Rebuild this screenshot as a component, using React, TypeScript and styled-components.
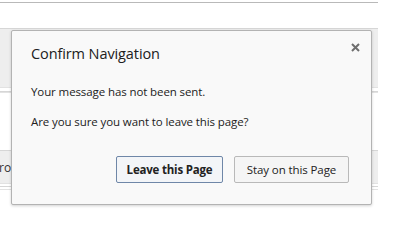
import styled, { createGlobalStyle } from "styled-components";

const GlobalStyle = createGlobalStyle`
  html, body {
    margin: 0;
    padding: 0;
    background: #ffffff;
  }
  body {
    font-family: "Open Sans", "Noto Sans", "Liberation Sans", sans-serif;
  }
`;

const Page = styled.div`
  position: relative;
  width: 397px;
  height: 225px;
  overflow: hidden;
  background: #ffffff;
`;

const Backdrop = styled.div`
  width: 378px;
  display: flex;
  flex-direction: column;
`;

const TopRule = styled.div`
  height: 2px;
  border-bottom: 1px solid #b9b9b9;
`;

const Band = styled.div<{ $gap: number; $height: number; $shade?: boolean }>`
  margin-top: ${(p) => p.$gap}px;
  height: ${(p) => p.$height}px;
  background: ${(p) => (p.$shade ? "#eeeeee" : "#ffffff")};
  border-top: 1px solid #d6d6d6;
  border-bottom: 1px solid #e2e2e2;
  display: flex;
  align-items: center;
  overflow: hidden;
`;

const ClippedText = styled.span`
  margin-left: -1px;
  font-size: 12px;
  color: #333333;
  font-family: "Open Sans", "Noto Sans", sans-serif;
`;

const Dialog = styled.div`
  position: absolute;
  left: 11px;
  top: 30px;
  width: 361px;
  height: 175px;
  box-sizing: border-box;
  background: #f9f9f9;
  border: 1px solid #b3b3b3;
  border-radius: 2px;
  box-shadow: 0 1px 3px rgba(0, 0, 0, 0.18);
  padding: 14px 20px 0 19px;
  display: flex;
  flex-direction: column;
  color: #222222;
`;

const Header = styled.div`
  display: flex;
  justify-content: space-between;
  align-items: flex-start;
`;

const Title = styled.h1`
  margin: 0;
  font-weight: 400;
  font-size: 14.5px;
  line-height: 18px;
  color: #202020;
  letter-spacing: -0.1px;
`;

const Close = styled.button`
  border: none;
  background: none;
  padding: 0;
  margin: -4px -10px 0 0;
  width: 12px;
  height: 12px;
  display: flex;
  align-items: center;
  justify-content: center;
  cursor: pointer;
`;

const Message = styled.p<{ $top: number }>`
  margin: ${(p) => p.$top}px 0 0;
  font-size: 11.5px;
  line-height: 16px;
  color: #222222;
  letter-spacing: -0.1px;
`;

const Actions = styled.div`
  margin-top: 26px;
  display: flex;
  justify-content: flex-end;
  gap: 11px;
  padding-right: 2px;
`;

const Button = styled.button<{ $primary?: boolean }>`
  height: 27px;
  padding: 0;
  width: ${(p) => (p.$primary ? 107 : 115)}px;
  box-sizing: border-box;
  border-radius: 2px;
  border: 1px solid ${(p) => (p.$primary ? "#6f87a8" : "#b9b9b9")};
  background: ${(p) => (p.$primary ? "#f3f5f8" : "#f5f5f5")};
  font-family: "Open Sans", "Noto Sans", sans-serif;
  font-size: 11.5px;
  font-weight: ${(p) => (p.$primary ? 700 : 400)};
  color: #222222;
  letter-spacing: ${(p) => (p.$primary ? "-0.2px" : "-0.1px")};
`;

export default function App() {
  return (
    <>
      <GlobalStyle />
      <Page>
        <Backdrop>
          <TopRule />
          <Band $gap={25} $height={58} $shade />
          <Band $gap={3} $height={0} />
          <Band $gap={57} $height={32} $shade>
            <ClippedText>ro</ClippedText>
          </Band>
          <Band $gap={2} $height={2} />
        </Backdrop>
        <Dialog>
          <Header>
            <Title>Confirm Navigation</Title>
            <Close aria-label="Close">
              <svg width="9" height="9" viewBox="0 0 9 9">
                <path d="M1 1 L8 8 M8 1 L1 8" stroke="#6e6e6e" strokeWidth="2" />
              </svg>
            </Close>
          </Header>
          <Message $top={21}>Your message has not been sent.</Message>
          <Message $top={14}>Are you sure you want to leave this page?</Message>
          <Actions>
            <Button $primary>Leave this Page</Button>
            <Button>Stay on this Page</Button>
          </Actions>
        </Dialog>
      </Page>
    </>
  );
}
